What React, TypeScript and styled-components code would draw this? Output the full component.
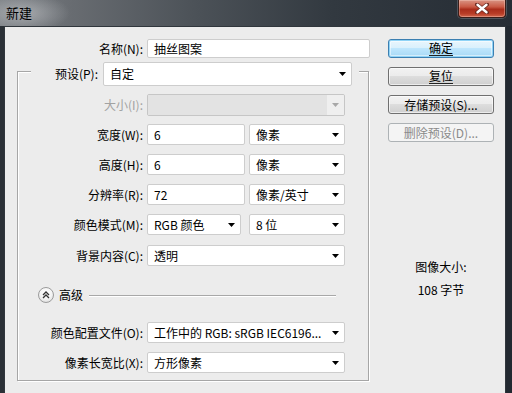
import React from 'react';
import styled, { createGlobalStyle, css } from 'styled-components';

const Global = createGlobalStyle`
  html, body { margin: 0; padding: 0; }
  body {
    background: #262d35;
    font-family: "Noto Sans CJK SC", "Noto Sans", sans-serif;
    font-size: 12px;
    color: #000;
  }
`;

const Window = styled.div`
  width: 512px;
  height: 393px;
  display: flex;
  flex-direction: column;
  overflow: hidden;
  background: linear-gradient(to right, #2a3036, #222931);
`;

const TitleBar = styled.div`
  height: 26px;
  flex: none;
  display: flex;
  justify-content: space-between;
  align-items: flex-start;
  background:
    radial-gradient(ellipse 48px 20px at 22px 13px, rgba(190, 193, 196, 0.7), rgba(190, 193, 196, 0) 100%),
    linear-gradient(to right, #7a7e83 0%, #686c71 14%, #4c5258 38%, #323940 65%, #262d35 100%);
`;

const Title = styled.div`
  padding: 5px 0 0 6px;
  font-size: 13px;
  line-height: 16px;
  color: #000;
`;

const CloseButton = styled.div`
  width: 48px;
  height: 18px;
  margin-right: 6px;
  box-sizing: border-box;
  border: 1px solid #3a1e1a;
  border-top: none;
  border-radius: 0 0 4px 4px;
  background: linear-gradient(#d99483 0%, #c95a45 40%, #aa2d1b 55%, #b83d27 80%, #d2664c 100%);
  box-shadow: inset 0 0 0 1px rgba(255, 220, 210, 0.35), 0 0 0 1px rgba(200, 205, 210, 0.25);
  display: flex;
  align-items: center;
  justify-content: center;
`;

const Panel = styled.div`
  flex: 1;
  margin: 0 6px 0 4px;
  border: 1px solid #30363c;
  border-bottom: none;
  background: #ececec;
  display: flex;
  align-items: flex-start;
`;

const LeftColumn = styled.div`
  flex: none;
  width: 352px;
  padding: 12px 0 0 12px;
`;

const RightColumn = styled.div`
  flex: none;
  width: 106px;
  margin-left: 19px;
  padding-top: 12px;
  display: flex;
  flex-direction: column;
  gap: 9px;
`;

const Row = styled.div<{ $top?: number; $h?: number }>`
  display: flex;
  align-items: center;
  gap: 4px;
  height: ${(p) => p.$h ?? 21}px;
  margin-top: ${(p) => p.$top ?? 9}px;
`;

const Label = styled.div<{ $w: number; $disabled?: boolean }>`
  width: ${(p) => p.$w}px;
  flex: none;
  text-align: right;
  white-space: nowrap;
  color: ${(p) => (p.$disabled ? '#a2a2a2' : '#000')};
  line-height: 16px;
`;

const fieldBase = css`
  box-sizing: border-box;
  height: 100%;
  border: 1px solid #cdcdcd;
  border-radius: 2px;
  background: #fff;
  display: flex;
  align-items: center;
  padding-left: 6px;
  white-space: nowrap;
  overflow: hidden;
  line-height: 16px;
`;

const TextBox = styled.div<{ $w: number }>`
  ${fieldBase};
  width: ${(p) => p.$w}px;
  flex: none;
`;

const SelectBox = styled.div<{ $w: number; $ml?: number }>`
  ${fieldBase};
  width: ${(p) => p.$w}px;
  flex: none;
  margin-left: ${(p) => p.$ml ?? 0}px;
  padding-right: 5px;
`;

const SelectText = styled.span`
  flex: 1;
  overflow: hidden;
`;

const DisabledSelect = styled.div<{ $w: number }>`
  box-sizing: border-box;
  width: ${(p) => p.$w}px;
  height: 100%;
  flex: none;
  border: 1px solid #c6c6c6;
  border-radius: 2px;
  display: flex;
  overflow: hidden;
`;

const DisabledFill = styled.div`
  flex: 1;
  background: #e3e3e3;
`;

const DisabledArrowArea = styled.div`
  width: 17px;
  background: #efefef;
  display: flex;
  align-items: center;
  justify-content: center;
`;

const Group = styled.div`
  box-sizing: border-box;
  width: 352px;
  margin-top: 13px;
  border: 1px solid #a6a6a6;
  box-shadow: inset 1px 1px 0 #fff, 1px 1px 0 #fff;
  padding-bottom: 7px;
`;

const PresetRow = styled.div`
  margin: -10px 9px 0 13px;
  height: 24px;
  background: #ececec;
  display: flex;
  align-items: center;
  justify-content: flex-end;
  gap: 5px;
  padding-right: 7px;
`;

const AdvancedRow = styled.div`
  display: flex;
  align-items: center;
  height: 16px;
  margin-top: 21px;
  padding-left: 20px;
  padding-right: 32px;
`;

const AdvancedToggle = styled.div`
  width: 16px;
  height: 16px;
  box-sizing: border-box;
  border-radius: 50%;
  border: 1px solid #9c9c9c;
  background: radial-gradient(circle at 50% 35%, #ffffff 0%, #f4f4f4 50%, #d6d6d6 100%);
  display: flex;
  align-items: center;
  justify-content: center;
  flex: none;
`;

const AdvancedText = styled.span`
  margin-left: 5px;
  line-height: 16px;
`;

const Rule = styled.div`
  flex: 1;
  height: 1px;
  margin-left: 6px;
  background: #a8a8a8;
  box-shadow: 0 1px 0 #fff;
`;

const Button = styled.div<{ $variant?: 'default' | 'normal' | 'disabled' }>`
  box-sizing: border-box;
  height: 19px;
  border-radius: 3px;
  display: flex;
  align-items: center;
  justify-content: center;
  line-height: 16px;
  white-space: nowrap;
  ${(p) =>
    p.$variant === 'default'
      ? css`
          border: 1px solid #3c7fb1;
          background: linear-gradient(#eaf6fd 0%, #d9f0fc 49%, #bee6fd 50%, #a7d9f5 100%);
          box-shadow: inset 0 0 0 1px #8fd3f6, inset 0 0 0 2px rgba(255, 255, 255, 0.5);
          color: #000;
        `
      : p.$variant === 'disabled'
      ? css`
          border: 1px solid #adb2b5;
          background: #f4f4f4;
          color: #8a8a8a;
        `
      : css`
          border: 1px solid #707070;
          background: linear-gradient(#f2f2f2 0%, #ebebeb 49%, #dddddd 50%, #cfcfcf 100%);
          box-shadow: inset 0 0 0 1px rgba(255, 255, 255, 0.6);
          color: #000;
        `}
`;

const Underlined = styled.span`
  border-bottom: 1px solid #222;
  line-height: 14px;
`;

const InfoBlock = styled.div`
  margin-top: 108px;
  display: flex;
  flex-direction: column;
  align-items: center;
  gap: 7px;
  line-height: 16px;
`;

const Arrow = ({ color = '#000' }: { color?: string }) => (
  <svg width="7" height="4" viewBox="0 0 7 4" style={{ flex: 'none' }}>
    <polygon points="0,0 7,0 3.5,4" fill={color} />
  </svg>
);

const Select = ({ w, text, ml }: { w: number; text: string; ml?: number }) => (
  <SelectBox $w={w} $ml={ml}>
    <SelectText>{text}</SelectText>
    <Arrow />
  </SelectBox>
);

export default function App() {
  return (
    <>
      <Global />
      <Window>
        <TitleBar>
          <Title>新建</Title>
          <CloseButton>
            <svg width="14" height="11" viewBox="0 0 14 11">
              <path d="M2 1.5 L12 9.5 M12 1.5 L2 9.5" stroke="#6b2a20" strokeWidth="4" strokeLinecap="round" />
              <path d="M2.5 1.8 L11.5 9.2 M11.5 1.8 L2.5 9.2" stroke="#ffffff" strokeWidth="2.4" strokeLinecap="round" />
            </svg>
          </CloseButton>
        </TitleBar>
        <Panel>
          <LeftColumn>
            <Row $top={0} $h={19}>
              <Label $w={126}>名称(N):</Label>
              <TextBox $w={223}>抽丝图案</TextBox>
            </Row>
            <Group>
              <PresetRow>
                <Label $w={66}>预设(P):</Label>
                <Select w={249} text="自定" />
              </PresetRow>
              <Row $top={8} $h={22}>
                <Label $w={125} $disabled>大小(I):</Label>
                <DisabledSelect $w={198}>
                  <DisabledFill />
                  <DisabledArrowArea>
                    <Arrow color="#a8a8a8" />
                  </DisabledArrowArea>
                </DisabledSelect>
              </Row>
              <Row $top={8}>
                <Label $w={125}>宽度(W):</Label>
                <TextBox $w={98}>6</TextBox>
                <Select w={96} text="像素" />
              </Row>
              <Row>
                <Label $w={125}>高度(H):</Label>
                <TextBox $w={98}>6</TextBox>
                <Select w={96} text="像素" />
              </Row>
              <Row>
                <Label $w={125}>分辨率(R):</Label>
                <TextBox $w={98}>72</TextBox>
                <Select w={96} text="像素/英寸" />
              </Row>
              <Row>
                <Label $w={125}>颜色模式(M):</Label>
                <Select w={94} text="RGB 颜色" />
                <Select w={96} text="8 位" ml={4} />
              </Row>
              <Row $top={10}>
                <Label $w={125}>背景内容(C):</Label>
                <Select w={198} text="透明" />
              </Row>
              <AdvancedRow>
                <AdvancedToggle>
                  <svg width="8" height="8" viewBox="0 0 8 8">
                    <path d="M1 4 L4 1 L7 4 M1 7 L4 4 L7 7" stroke="#333" strokeWidth="1.3" fill="none" />
                  </svg>
                </AdvancedToggle>
                <AdvancedText>高级</AdvancedText>
                <Rule />
              </AdvancedRow>
              <Row $top={19}>
                <Label $w={125}>颜色配置文件(O):</Label>
                <Select w={198} text="工作中的 RGB: sRGB IEC6196..." />
              </Row>
              <Row>
                <Label $w={125}>像素长宽比(X):</Label>
                <Select w={198} text="方形像素" />
              </Row>
            </Group>
          </LeftColumn>
          <RightColumn>
            <Button $variant="default">
              <Underlined>确定</Underlined>
            </Button>
            <Button>
              <Underlined>复位</Underlined>
            </Button>
            <Button>存储预设(S)...</Button>
            <Button $variant="disabled">删除预设(D)...</Button>
            <InfoBlock>
              <div>图像大小:</div>
              <div>108 字节</div>
            </InfoBlock>
          </RightColumn>
        </Panel>
      </Window>
    </>
  );
}
